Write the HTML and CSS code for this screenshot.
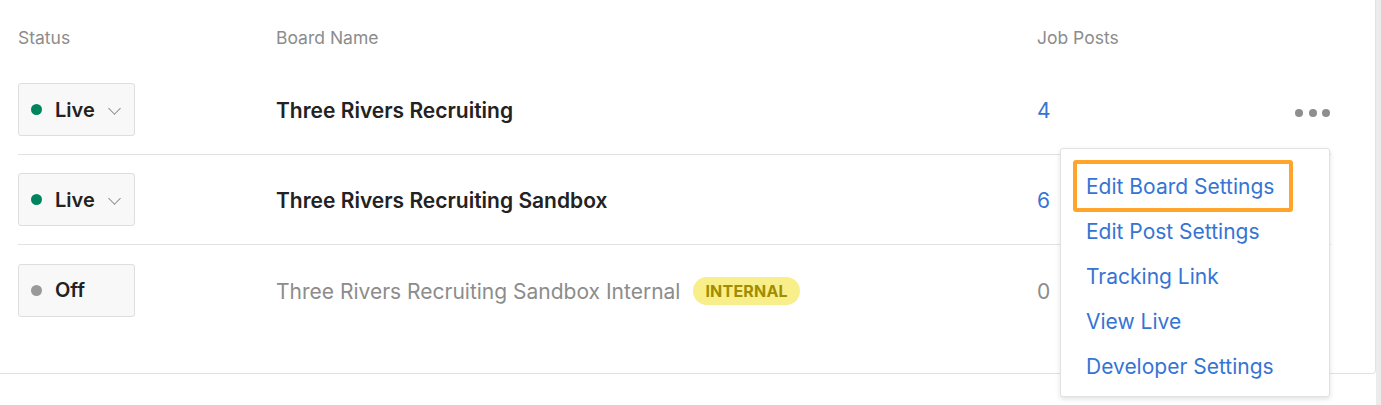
FILE: index.html
```html
<!DOCTYPE html>
<html lang="en">
<head>
  <meta charset="UTF-8" />
  <title>Job Boards</title>
  <link rel="stylesheet" href="styles.css">
</head>
<body>
  <div class="page">
    <div class="card">
      <div class="table">
        <div class="row head">
          <div>Status</div>
          <div>Board Name</div>
          <div>Job Posts</div>
          <div></div>
        </div>

        <div class="row">
          <div><button class="status"><span class="dot live"></span>Live<span class="chev"></span></button></div>
          <div class="name">Three Rivers Recruiting</div>
          <div class="count">4</div>
          <div class="actions">
            <span class="more"><i></i><i></i><i></i></span>
            <ul class="menu">
              <li class="picked"><a href="#">Edit Board Settings</a></li>
              <li><a href="#">Edit Post Settings</a></li>
              <li><a href="#">Tracking Link</a></li>
              <li><a href="#">View Live</a></li>
              <li><a href="#">Developer Settings</a></li>
            </ul>
          </div>
        </div>

        <div class="row">
          <div><button class="status"><span class="dot live"></span>Live<span class="chev"></span></button></div>
          <div class="name">Three Rivers Recruiting Sandbox</div>
          <div class="count">6</div>
          <div class="actions"></div>
        </div>

        <div class="row last">
          <div><button class="status"><span class="dot off"></span>Off</button></div>
          <div class="name muted">Three Rivers Recruiting Sandbox Internal <span class="badge">INTERNAL</span></div>
          <div class="count zero">0</div>
          <div class="actions"></div>
        </div>
      </div>
    </div>
    <div class="edge"></div>
  </div>
</body>
</html>
```

FILE: styles.css
```css
body {
  margin: 0;
  font-family: Inter, "Liberation Sans", sans-serif;
  color: #222;
  background-color: #ffffff;
}

.page {
  display: flex;
  height: 405px;
}

.card {
  flex: 1;
  height: 374px;
  border-right: 1px solid #e2e2e2;
  border-bottom: 1px solid #e2e2e2;
  border-bottom-right-radius: 4px;
  box-sizing: border-box;
}

.edge {
  width: 5px;
  background-color: #ececec;
}

.table {
  padding: 0 44px 0 18px;
}

.row {
  display: grid;
  grid-template-columns: 258px 761px 1fr 40px;
  align-items: center;
  height: 90px;
  border-bottom: 1px solid #e2e2e2;
  box-sizing: border-box;
}

.row.head {
  height: 65px;
  border-bottom: none;
  font-size: 17.5px;
  color: #8c8c8c;
  align-items: start;
  padding-top: 27px;
}

.row.last {
  border-bottom: none;
}

.row > .name,
.row > .count {
  padding-top: 2px;
}

.status {
  display: flex;
  align-items: center;
  width: 117px;
  height: 53px;
  padding: 0 0 0 12px;
  background-color: #f8f8f8;
  border: 1px solid #dedede;
  border-radius: 3px;
  font-family: inherit;
  font-size: 20px;
  font-weight: 600;
  color: #222;
  box-sizing: border-box;
}

.dot {
  width: 11px;
  height: 11px;
  border-radius: 50%;
  margin-right: 13px;
}

.dot.live { background-color: #00845e; }
.dot.off { background-color: #999; }

.chev {
  width: 8px;
  height: 8px;
  border-right: 1px solid #8c8c8c;
  border-bottom: 1px solid #8c8c8c;
  transform: rotate(45deg);
  margin: -3px 0 0 15px;
}

.name {
  font-size: 21px;
  font-weight: 600;
  display: flex;
  align-items: center;
}

.name.muted {
  font-weight: 400;
  color: #8c8c8c;
}

.badge {
  margin-left: 13px;
  padding: 4px 12px;
  background-color: #f8ef8b;
  color: #a28d00;
  font-size: 16px;
  font-weight: 700;
  border-radius: 14px;
  letter-spacing: 0.2px;
}

.count {
  font-size: 21px;
  color: #3574d4;
}

.count.zero {
  color: #8c8c8c;
}

.actions {
  position: relative;
  height: 100%;
  display: flex;
  align-items: center;
  justify-content: flex-end;
}

.more {
  display: flex;
  gap: 5.5px;
  margin: 6px 1px 0 0;
}

.more i {
  width: 8px;
  height: 8px;
  border-radius: 50%;
  background-color: #8e8e8e;
}

.menu {
  position: absolute;
  top: 83px;
  right: 1px;
  width: 270px;
  margin: 0;
  padding: 11px 0 7px;
  list-style: none;
  background-color: #fff;
  border: 1px solid #e2e2e2;
  border-radius: 3px;
  box-shadow: 0 2px 5px rgba(0, 0, 0, 0.12);
  box-sizing: border-box;
  z-index: 2;
}

.menu li {
  height: 45px;
  display: flex;
  align-items: center;
  padding-left: 25px;
}

.menu li.picked {
  height: 52px;
  margin: 0 36px 0 12px;
  padding-left: 9px;
  border: 4px solid #ffa52c;
  border-radius: 3px;
  box-sizing: border-box;
}

.menu li.picked + li {
  margin-top: -3px;
}

.menu a {
  font-size: 21px;
  color: #3574d4;
  text-decoration: none;
}
```
